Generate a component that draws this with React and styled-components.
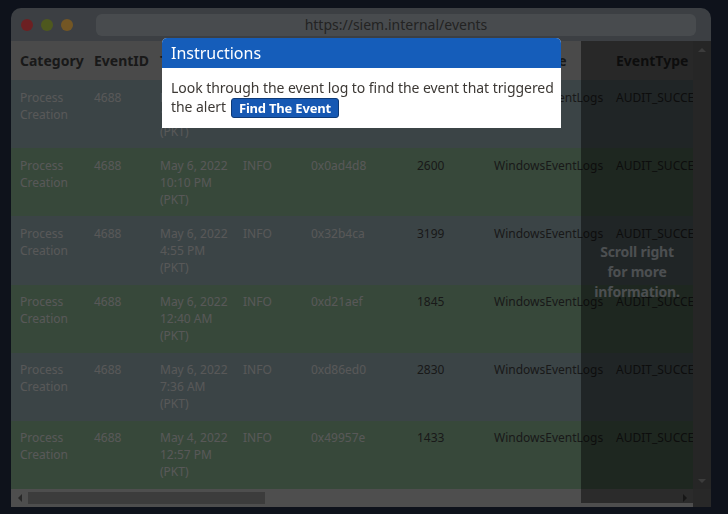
import React from "react";
import styled, { createGlobalStyle, css } from "styled-components";

const Global = createGlobalStyle`
  html, body { margin: 0; padding: 0; }
  body {
    background: #1f283c;
    font-family: "Noto Sans", "Open Sans", sans-serif;
    overflow: hidden;
  }
`;

const Page = styled.div`
  width: 728px;
  height: 514px;
  position: relative;
  padding: 8px 0 0 11px;
  box-sizing: border-box;
`;

const Window = styled.div`
  width: 700px;
  height: 499px;
  display: flex;
  flex-direction: column;
  border-radius: 10px 10px 0 0;
  overflow: hidden;
  background: #858c95;
`;

const TitleBar = styled.div`
  height: 33px;
  flex: none;
  display: flex;
  align-items: center;
  padding: 0 15px 0 10px;
  gap: 8px;
`;

const Dot = styled.span`
  width: 12px;
  height: 12px;
  border-radius: 50%;
  background: ${(p) => p.$c};
  flex: none;
`;

const Address = styled.div`
  margin-left: 15px;
  flex: 1;
  height: 22px;
  border-radius: 6px;
  background: #a0a7ad;
  color: #4e4e4e;
  font-size: 14px;
  display: flex;
  align-items: center;
  justify-content: center;
`;

const Frame = styled.div`
  position: relative;
  flex: 1;
  min-height: 0;
  display: grid;
  grid-template-columns: 1fr 18px;
  grid-template-rows: 1fr 18px;
`;

const Viewport = styled.div`
  overflow: hidden;
  background: #a4a4a4;
`;

const Table = styled.table`
  border-collapse: collapse;
  table-layout: fixed;
  width: 1873px;
`;

const Th = styled.th`
  text-align: left;
  font-size: 14px;
  font-weight: 700;
  color: #383838;
  height: 39px;
  padding: 0 9px;
  background: #a4a4a4;
  white-space: nowrap;
  overflow: hidden;
`;

const Tr = styled.tr`
  background: ${(p) => (p.$alt ? "#7aa081" : "#83979c")};
`;

const Td = styled.td`
  vertical-align: top;
  font-size: 12px;
  line-height: 17px;
  height: 51.2px;
  padding: 8.5px 9px;
  color: ${(p) => (p.$light ? "#c4c4c4" : "#383838")};
  white-space: ${(p) => (p.$nowrap ? "nowrap" : "normal")};
  overflow: hidden;
`;

const Line = styled.span`
  display: block;
  white-space: nowrap;
`;

const VBar = styled.div`
  background: #555555;
  display: flex;
  flex-direction: column;
  justify-content: space-between;
`;

const HBar = styled.div`
  background: #adadad;
  display: flex;
  align-items: center;
`;

const Corner = styled.div`
  background: #595959;
`;

const ArrowBtn = styled.div`
  flex: none;
  width: ${(p) => (p.$vertical ? "18px" : "17px")};
  height: ${(p) => (p.$vertical ? "17px" : "18px")};
  display: flex;
  align-items: center;
  justify-content: center;
`;

const tri = {
  up: css`
    border-left: 4px solid transparent;
    border-right: 4px solid transparent;
    border-bottom: 4px solid ${(p) => p.$c};
  `,
  down: css`
    border-left: 4px solid transparent;
    border-right: 4px solid transparent;
    border-top: 4px solid ${(p) => p.$c};
  `,
  left: css`
    border-top: 4px solid transparent;
    border-bottom: 4px solid transparent;
    border-right: 4px solid ${(p) => p.$c};
  `,
  right: css`
    border-top: 4px solid transparent;
    border-bottom: 4px solid transparent;
    border-left: 4px solid ${(p) => p.$c};
  `,
};

const Triangle = styled.span`
  width: 0;
  height: 0;
  ${(p) => tri[p.$dir]}
`;

const Track = styled.div`
  flex: 1;
  height: 12px;
  display: flex;
`;

const Thumb = styled.div`
  height: 12px;
  background: #858585;
`;

const ScrollHint = styled.div`
  position: absolute;
  top: 0;
  right: 18px;
  bottom: 4px;
  width: 112px;
  background: rgba(0, 0, 0, 0.45);
  display: flex;
  align-items: center;
  justify-content: center;
  text-align: center;
  color: #a9afb3;
  font-size: 14px;
  font-weight: 700;
  line-height: 20px;
  letter-spacing: -0.2px;
  pointer-events: none;
`;

const Backdrop = styled.div`
  position: fixed;
  inset: 0;
  background: rgba(0, 0, 0, 0.55);
`;

const Modal = styled.div`
  position: absolute;
  top: 38px;
  left: 162px;
  width: 399px;
  border-radius: 5px 5px 0 0;
  overflow: hidden;
  background: #ffffff;
`;

const ModalHead = styled.div`
  height: 30px;
  background: #155dba;
  color: #ffffff;
  font-size: 16px;
  display: flex;
  align-items: center;
  padding: 0 9px;
`;

const ModalBody = styled.div`
  padding: 10px 6px 10px 9px;
  font-size: 14px;
  line-height: 19px;
  letter-spacing: -0.05px;
  color: #3d3935;
`;

const FindButton = styled.button`
  font-family: inherit;
  font-size: 13px;
  font-weight: 700;
  letter-spacing: -0.2px;
  color: #ffffff;
  background: #1658b3;
  border: 1px solid #0d3a78;
  border-radius: 3px;
  padding: 0 7px;
  height: 20px;
  line-height: 17px;
  margin-left: 5px;
  vertical-align: middle;
  cursor: pointer;
`;

const columns = [
  ["Category", 74],
  ["EventID", 66],
  ["Time", 83],
  ["Level", 68],
  ["ProcessID", 106],
  ["ThreadID", 77],
  ["LogSource", 122],
  ["EventType", 160],
  ["Computer", 160],
  ["User", 160],
  ["ProcessName", 220],
  ["CommandLine", 380],
  ["ParentProcess", 197],
];

const rows = [
  ["May 7, 2022", "1:22 AM", "0x1f3a2c", "2412"],
  ["May 6, 2022", "10:10 PM", "0x0ad4d8", "2600"],
  ["May 6, 2022", "4:55 PM", "0x32b4ca", "3199"],
  ["May 6, 2022", "12:40 AM", "0xd21aef", "1845"],
  ["May 6, 2022", "7:36 AM", "0xd86ed0", "2830"],
  ["May 4, 2022", "12:57 PM", "0x49957e", "1433"],
];

export default function App() {
  return (
    <Page>
      <Global />
      <Window>
        <TitleBar>
          <Dot $c="#f0474c" />
          <Dot $c="#adc443" />
          <Dot $c="#ffbf50" />
          <Address>https://siem.internal/events</Address>
        </TitleBar>
        <Frame>
          <Viewport>
            <Table>
              <colgroup>
                {columns.map(([n, w]) => (
                  <col key={n} style={{ width: w }} />
                ))}
              </colgroup>
              <thead>
                <tr>
                  {columns.map(([n]) => (
                    <Th key={n}>{n}</Th>
                  ))}
                </tr>
              </thead>
              <tbody>
                {rows.map((r, i) => (
                  <Tr key={i} $alt={i % 2 === 1}>
                    <Td $light>Process Creation</Td>
                    <Td $light>4688</Td>
                    <Td $light>
                      <Line>{r[0]}</Line>
                      <Line>{r[1]}</Line>
                      <Line>(PKT)</Line>
                    </Td>
                    <Td $light>INFO</Td>
                    <Td $light>{r[2]}</Td>
                    <Td>{r[3]}</Td>
                    <Td>WindowsEventLogs</Td>
                    <Td $nowrap>AUDIT_SUCCESS</Td>
                    <Td $nowrap>WS-FIN-0{i + 3}</Td>
                    <Td $nowrap>CORP\jdoe</Td>
                    <Td $nowrap>C:\Windows\System32\svchost.exe</Td>
                    <Td $nowrap>svchost.exe -k netsvcs -p</Td>
                    <Td $nowrap>services.exe</Td>
                  </Tr>
                ))}
              </tbody>
            </Table>
          </Viewport>
          <VBar>
            <ArrowBtn $vertical>
              <Triangle $dir="up" $c="#858585" />
            </ArrowBtn>
            <ArrowBtn $vertical>
              <Triangle $dir="down" $c="#858585" />
            </ArrowBtn>
          </VBar>
          <HBar>
            <ArrowBtn>
              <Triangle $dir="left" $c="#595959" />
            </ArrowBtn>
            <Track>
              <Thumb style={{ width: 237 }} />
            </Track>
            <ArrowBtn>
              <Triangle $dir="right" $c="#595959" />
            </ArrowBtn>
          </HBar>
          <Corner />
          <ScrollHint>
            Scroll right
            <br />
            for more
            <br />
            information.
          </ScrollHint>
        </Frame>
      </Window>
      <Backdrop />
      <Modal>
        <ModalHead>Instructions</ModalHead>
        <ModalBody>
          Look through the event log to find the event that triggered the alert
          <FindButton>Find The Event</FindButton>
        </ModalBody>
      </Modal>
    </Page>
  );
}
